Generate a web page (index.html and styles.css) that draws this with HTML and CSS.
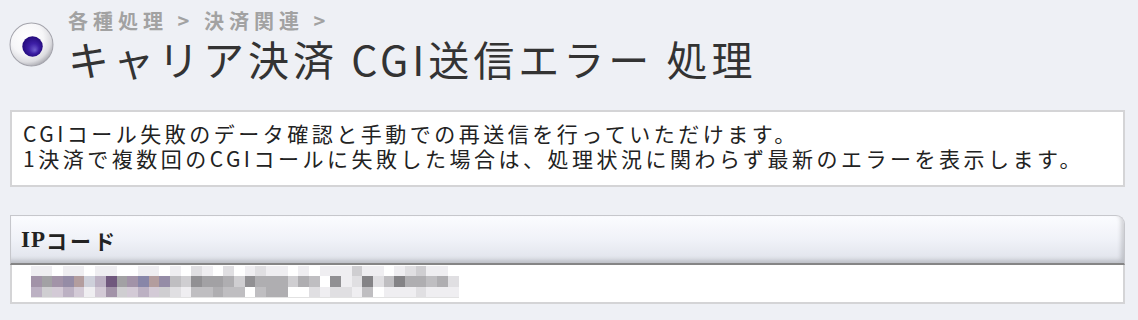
FILE: index.html
```html
<!DOCTYPE html>
<html lang="ja">
<head>
<meta charset="utf-8">
<title>キャリア決済 CGI送信エラー 処理</title>
<link rel="stylesheet" href="styles.css">
</head>
<body>
<div class="page">
  <header class="page-head">
    <svg class="head-icon" width="45" height="45" viewBox="0 0 44 44" aria-hidden="true">
      <defs>
        <radialGradient id="sph" cx="40%" cy="35%" r="68%">
          <stop offset="0" stop-color="#ffffff"/>
          <stop offset="0.55" stop-color="#f6f6f8"/>
          <stop offset="0.82" stop-color="#dcdce0"/>
          <stop offset="1" stop-color="#a9a9b0"/>
        </radialGradient>
        <radialGradient id="dot" cx="50%" cy="50%" r="55%" fx="62%" fy="68%">
          <stop offset="0" stop-color="#6f5dce"/>
          <stop offset="0.45" stop-color="#3d1fa6"/>
          <stop offset="1" stop-color="#200775"/>
        </radialGradient>
      </defs>
      <circle cx="22" cy="22" r="21" fill="url(#sph)" stroke="#a4a4ac" stroke-width="1"/>
      <circle cx="23" cy="24" r="10" fill="url(#dot)"/>
    </svg>
    <div class="head-text">
      <div class="crumbs">各種処理 &gt; 決済関連 &gt;</div>
      <h1 class="title">キャリア決済 CGI送信エラー 処理</h1>
    </div>
  </header>

  <div class="note">
    <p>CGIコール失敗のデータ確認と手動での再送信を行っていただけます。</p>
    <p>1決済で複数回のCGIコールに失敗した場合は、処理状況に関わらず最新のエラーを表示します。</p>
  </div>

  <section class="panel">
    <div class="panel-head"><span class="latin">IP</span>コード</div>
    <div class="panel-body">
      <div class="mosaic" aria-label="（マスク済み）">
        <span class="k1"></span><span class="k1"></span><span class="w"></span><span class="k1"></span><span class="k1"></span><span class="w"></span><span class="k1"></span><span class="k1"></span><span class="w"></span><span class="w"></span><span class="k1"></span><span class="k1"></span><span class="w"></span><span class="k1"></span><span class="w"></span><span class="k2"></span><span class="k1"></span><span class="w"></span><span class="k2"></span><span class="w"></span><span class="k1"></span><span class="k2"></span><span class="k1"></span><span class="k1"></span><span class="w"></span><span class="k1"></span><span class="w"></span><span class="k1"></span><span class="k1"></span><span class="k1"></span><span class="k3"></span><span class="k1"></span><span class="k1"></span><span class="w"></span><span class="k1"></span><span class="k2"></span><span class="k3"></span><span class="k1"></span><span class="k1"></span><span class="w"></span>
        <span class="v3"></span><span class="k6"></span><span class="v3"></span><span class="v4"></span><span class="r1"></span><span class="v0"></span><span class="v2"></span><span class="v5"></span><span class="k6"></span><span class="v3"></span><span class="b1"></span><span class="r1"></span><span class="v4"></span><span class="k4"></span><span class="k3"></span><span class="k7"></span><span class="k6"></span><span class="k6"></span><span class="k5"></span><span class="k3"></span><span class="k7"></span><span class="k5"></span><span class="k5"></span><span class="k5"></span><span class="k3"></span><span class="k5"></span><span class="k4"></span><span class="w"></span><span class="k7"></span><span class="k1"></span><span class="k2"></span><span class="k8"></span><span class="k2"></span><span class="k4"></span><span class="k8"></span><span class="k5"></span><span class="k5"></span><span class="k4"></span><span class="k5"></span><span class="k2"></span>
        <span class="v2"></span><span class="k3"></span><span class="v1"></span><span class="v2"></span><span class="v1"></span><span class="k1"></span><span class="v1"></span><span class="v3"></span><span class="k3"></span><span class="v1"></span><span class="v2"></span><span class="v1"></span><span class="k3"></span><span class="k2"></span><span class="k1"></span><span class="k4"></span><span class="k4"></span><span class="k5"></span><span class="k4"></span><span class="k4"></span><span class="w"></span><span class="k4"></span><span class="k5"></span><span class="k5"></span><span class="w"></span><span class="w"></span><span class="k2"></span><span class="k1"></span><span class="k2"></span><span class="k2"></span><span class="k1"></span><span class="k4"></span><span class="w"></span><span class="k1"></span><span class="k1"></span><span class="k1"></span><span class="k2"></span><span class="k1"></span><span class="k1"></span><span class="k1"></span>
      </div>
    </div>
  </section>
</div>
</body>
</html>
```

FILE: styles.css
```css
html, body {
  margin: 0;
  padding: 0;
}

body {
  background: #eef0f5;
  font-family: "Noto Sans CJK JP", "Noto Sans", sans-serif;
  color: #222;
}

.page {
  padding: 0 13px 0 10px;
}

/* ---------- heading ---------- */
.page-head {
  display: flex;
  align-items: flex-start;
  padding-top: 9px;
}

.head-icon {
  flex: none;
  margin: 13px 0 0 -1px;
  display: block;
}

.head-text {
  margin-left: 14px;
}

.crumbs {
  font-size: 20px;
  line-height: 24px;
  font-weight: bold;
  letter-spacing: 5px;
  color: #a2a2a2;
}

.title {
  margin: 3px 0 0;
  font-size: 41px;
  line-height: 44px;
  font-weight: normal;
  letter-spacing: 4px;
  color: #333;
}

/* ---------- note box ---------- */
.note {
  margin-top: 30px;
  background: #fff;
  border: 2px solid #d4d4d6;
  padding: 9px 11px 14px;
  font-size: 21px;
  line-height: 25px;
  letter-spacing: 3.5px;
  color: #222;
}

.note p {
  margin: 0;
  white-space: nowrap;
}

/* ---------- panel ---------- */
.panel {
  margin-top: 28px;
}

.panel-head {
  height: 47px;
  display: flex;
  align-items: center;
  padding-left: 10px;
  border: 1px solid #c6c7cc;
  border-bottom: 2px solid #858585;
  border-top-right-radius: 9px;
  background: linear-gradient(#fbfcff, #f0f2f8 50%, #dfe2ea);
  box-shadow: inset -3px -3px 4px rgba(0, 0, 0, 0.16);
  font-size: 21px;
  font-weight: bold;
  letter-spacing: 3px;
  color: #222;
}

.panel-head .latin {
  font-family: "Liberation Serif", serif;
  font-size: 23px;
  letter-spacing: 1px;
}

.panel-body {
  background: #fff;
  border: 2px solid #d4d4d6;
  border-top: 0;
  padding: 1px 0 4px 19px;
}

.mosaic {
  display: grid;
  grid-template-columns: repeat(40, 10.7px);
  grid-template-rows: 10px 11px 10px;
  width: max-content;
  border-bottom: 1px solid #e2e2e2;
  filter: blur(0.4px);
}

.mosaic span { display: block; }

.w  { background: #ffffff; }
.k1 { background: #efeef1; }
.k2 { background: #e0dfe2; }
.k3 { background: #cfced1; }
.k4 { background: #bfbec1; }
.k5 { background: #afaeb1; }
.k6 { background: #a2a1a4; }
.k7 { background: #919093; }
.k8 { background: #848386; }
.v0 { background: #ced0da; }
.v1 { background: #d3cad6; }
.v2 { background: #bcb1c3; }
.v3 { background: #a293a8; }
.v4 { background: #958ca6; }
.v5 { background: #70587d; }
.r1 { background: #b39d9e; }
.b1 { background: #8886a8; }
```
